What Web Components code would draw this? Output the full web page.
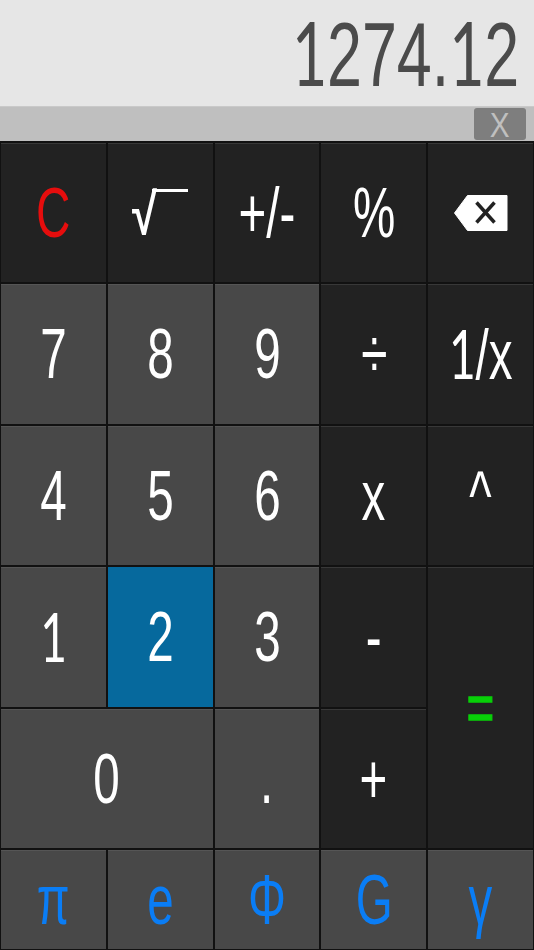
<!DOCTYPE html>
<html lang="en">
<head>
<meta charset="utf-8">
<title>Calculator</title>
<style>
  html, body { margin: 0; height: 100%; background: #111; }
  body { font-family: "Liberation Sans", Arial, sans-serif; }
</style>
</head>
<body>
<calc-app>
  <calc-display slot="display" value="1274.12"></calc-display>
  <calc-bar slot="bar"></calc-bar>
  <calc-pad slot="pad">
    <calc-key kind="fn" tone="red">C</calc-key>
    <calc-key kind="fn" label="Square root"><calc-root></calc-root></calc-key>
    <calc-key kind="fn">+/-</calc-key>
    <calc-key kind="fn">%</calc-key>
    <calc-key kind="fn" label="Backspace">
      <svg width="54" height="36" viewBox="0 0 54 36" style="display:block">
        <path d="M13.500 0.500H53V35.500H13.500L0.500 18Z" fill="#fff" stroke="#fff" stroke-linejoin="round"/>
        <path d="M22.500 7.500L40.500 27.500M40.500 7.500L22.500 27.500" stroke="#222" stroke-width="3.500" fill="none"/>
      </svg>
    </calc-key>

    <calc-key>7</calc-key>
    <calc-key>8</calc-key>
    <calc-key>9</calc-key>
    <calc-key kind="fn">÷</calc-key>
    <calc-key kind="fn"><one-digit></one-digit>/x</calc-key>

    <calc-key>4</calc-key>
    <calc-key>5</calc-key>
    <calc-key>6</calc-key>
    <calc-key kind="fn">x</calc-key>
    <calc-key kind="fn">^</calc-key>

    <calc-key><one-digit></one-digit></calc-key>
    <calc-key active>2</calc-key>
    <calc-key>3</calc-key>
    <calc-key kind="fn">-</calc-key>
    <calc-key kind="fn" tone="green" rows="2" style="-webkit-text-stroke: 1.4px #08d008">=</calc-key>

    <calc-key cols="2">0</calc-key>
    <calc-key>.</calc-key>
    <calc-key kind="fn">+</calc-key>

    <calc-key tone="blue">π</calc-key>
    <calc-key tone="blue">e</calc-key>
    <calc-key tone="blue">Φ</calc-key>
    <calc-key tone="blue">G</calc-key>
    <calc-key tone="blue">γ</calc-key>
  </calc-pad>
</calc-app>

<script>
const html = String.raw;

class CalcApp extends HTMLElement {
  constructor() {
    super();
    this.attachShadow({ mode: "open" });
    this.shadowRoot.innerHTML = html`
      <style>
        :host {
          display: flex;
          flex-direction: column;
          height: 100vh;
          overflow: hidden;
        }
        .pad { display: flex; flex: 1; min-height: 0; }
      </style>
      <slot name="display"></slot>
      <slot name="bar"></slot>
      <div class="pad"><slot name="pad"></slot></div>
    `;
  }
}
customElements.define("calc-app", CalcApp);

// the figure 1 has a foot in the reference, Liberation's does not
class OneDigit extends HTMLElement {
  constructor() {
    super();
    this.attachShadow({ mode: "open" });
    this.shadowRoot.innerHTML = html`<style>
        :host {
          display: inline;
          font-family: Lato, "Liberation Sans", sans-serif;
          font-size: 0.97em;
          letter-spacing: -0.006em;
        }
      </style>1`;
  }
}
customElements.define("one-digit", OneDigit);

class CalcDisplay extends HTMLElement {
  constructor() {
    super();
    this.attachShadow({ mode: "open" });
    this.shadowRoot.innerHTML = html`
      <style>
        :host {
          display: flex;
          justify-content: flex-end;
          align-items: center;
          height: 106px;
          box-sizing: border-box;
          padding: 2px 15px 0 0;
          background: #e6e6e6;
          color: #4b4b4b;
          font: 91px/1 "Liberation Sans", Arial, sans-serif;
        }
        span {
          display: inline-block;
          transform: scaleX(0.69);
          transform-origin: right center;
          white-space: nowrap;
        }
      </style>
      <span></span>
    `;
    this.shadowRoot.querySelector("span").innerHTML = this.getAttribute("value")
      .replace(/1/g, "<one-digit></one-digit>");
  }
}
customElements.define("calc-display", CalcDisplay);

class CalcBar extends HTMLElement {
  constructor() {
    super();
    this.attachShadow({ mode: "open" });
    this.shadowRoot.innerHTML = html`
      <style>
        :host {
          display: flex;
          justify-content: flex-end;
          align-items: center;
          height: 35px;
          padding-right: 8px;
          background: #bfbfbf;
          border-top: 1px solid #c9c9c9;
          box-sizing: border-box;
        }
        button {
          display: flex;
          justify-content: center;
          align-items: center;
          width: 52px;
          height: 32px;
          padding: 0;
          border: 0;
          border-radius: 3px;
          background: #7e7e7e;
          color: #bfbfbf;
          font: 35px/1 "Liberation Sans", Arial, sans-serif;
        }
        span { display: inline-block; transform: scaleX(0.85); }
      </style>
      <button><span>X</span></button>
    `;
  }
}
customElements.define("calc-bar", CalcBar);

class CalcPad extends HTMLElement {
  constructor() {
    super();
    this.attachShadow({ mode: "open" });
    this.shadowRoot.innerHTML = html`
      <style>
        :host {
          flex: 1;
          display: grid;
          grid-template-columns: repeat(5, 1fr);
          grid-template-rows: repeat(5, 139.5px) 1fr;
          gap: 2px;
          padding: 1.5px 1px;
          background: #111;
          box-sizing: border-box;
        }
      </style>
      <slot></slot>
    `;
  }
}
customElements.define("calc-pad", CalcPad);

// square root sign: the glyph plus the bar over the radicand
class CalcRoot extends HTMLElement {
  constructor() {
    super();
    this.attachShadow({ mode: "open" });
    this.shadowRoot.innerHTML = html`
      <style>
        :host {
          display: inline-block;
          position: relative;
          width: 56px;
          height: 50px;
          font: bold 58px/50px "Liberation Sans", Arial, sans-serif;
          color: #fff;
          transform: translateY(-3px);
        }
        span {
          display: inline-block;
          transform: scaleX(0.78);
          transform-origin: left center;
        }
        .bar {
          position: absolute;
          left: 20px;
          top: 0;
          width: 36px;
          height: 3.5px;
          background: #fff;
        }
      </style>
      <span>√</span><i class="bar"></i>
    `;
  }
}
customElements.define("calc-root", CalcRoot);

const KEY_COLORS = { red: "#e60d0d", blue: "#0a7df5", green: "#08d008" };

class CalcKey extends HTMLElement {
  static get observedAttributes() {
    return ["rows", "cols", "tone"];
  }
  constructor() {
    super();
    this.attachShadow({ mode: "open" });
    this.shadowRoot.innerHTML = html`
      <style>
        :host {
          display: flex;
          justify-content: center;
          align-items: center;
          min-width: 0;
          min-height: 0;
          background: #484848;
          border-top: 1px solid #555;
          box-sizing: border-box;
          color: var(--key-color, #fff);
          font: 70px/1 "Liberation Sans", Arial, sans-serif;
          overflow: hidden;
        }
        :host([kind="fn"]) {
          background: #222;
          border-top-color: #383838;
        }
        :host([active]) {
          background: #06699d;
          border-top-color: #06699d;
        }
        .label {
          display: inline-block;
          transform: scaleX(0.68);
          white-space: nowrap;
        }
        :host([label]) .label { transform: none; }
      </style>
      <span class="label"><slot></slot></span>
    `;
  }
  attributeChangedCallback() {
    if (this.hasAttribute("rows")) this.style.gridRow = `span ${this.getAttribute("rows")}`;
    if (this.hasAttribute("cols")) this.style.gridColumn = `span ${this.getAttribute("cols")}`;
    const tone = KEY_COLORS[this.getAttribute("tone")];
    if (tone) this.style.setProperty("--key-color", tone);
  }
}
customElements.define("calc-key", CalcKey);
</script>
</body>
</html>
